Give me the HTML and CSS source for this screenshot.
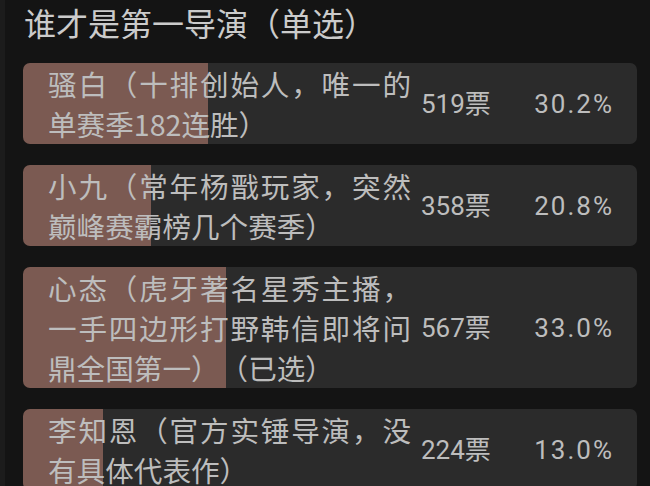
FILE: index.html
```html
<!DOCTYPE html>
<html lang="zh-CN">

<head>
    <meta charset="UTF-8">
    <meta name="viewport" content="width=device-width, initial-scale=1.0">
    <title>投票</title>
    <link rel="stylesheet" href="styles.css">
</head>

<body>
    <div class="poll">
        <h1 class="poll-title">谁才是第一导演（单选）</h1>
        <ul class="options">
            <li class="option" style="--pct: 30.2%">
                <span class="option-text">骚白（十排创始人，唯一的单赛季182连胜）</span>
                <span class="option-votes">519票</span>
                <span class="option-pct">30.2%</span>
            </li>
            <li class="option" style="--pct: 20.8%">
                <span class="option-text">小九（常年杨戬玩家，突然巅峰赛霸榜几个赛季）</span>
                <span class="option-votes">358票</span>
                <span class="option-pct">20.8%</span>
            </li>
            <li class="option" style="--pct: 33.0%">
                <span class="option-text">心态（虎牙著名星秀主播，一手四边形打野韩信即将问鼎全国第一）（已选）</span>
                <span class="option-votes">567票</span>
                <span class="option-pct">33.0%</span>
            </li>
            <li class="option" style="--pct: 13.0%">
                <span class="option-text">李知恩（官方实锤导演，没有具体代表作）</span>
                <span class="option-votes">224票</span>
                <span class="option-pct">13.0%</span>
            </li>
        </ul>
    </div>
</body>

</html>
```

FILE: styles.css
```css
* {
    margin: 0;
    padding: 0;
    box-sizing: border-box;
}

html,
body {
    height: 100%;
}

body {
    overflow: hidden;
    background-color: #141414;
    border-left: 5px solid #1c1c1c;
    color: #bdbdbd;
    font-family: Roboto, "Noto Sans CJK SC", sans-serif;
}

li {
    list-style: none;
}

.poll {
    padding: 0 13px 0 18px;
}

.poll-title {
    margin-left: 1px;
    margin-bottom: 19px;
    font-family: "Noto Sans CJK SC", sans-serif;
    font-size: 32px;
    font-weight: 400;
    line-height: 44px;
    color: #cbcbcb;
}

.options {
    display: flex;
    flex-direction: column;
    gap: 21px;
}

/* 进度条用背景渐变画，宽度由 --pct 决定 */
.option {
    display: grid;
    grid-template-columns: 363px 1fr auto;
    align-items: center;
    width: 614px;
    padding: 0.5px 23px 0.5px 25px;
    border-radius: 7px;
    background: linear-gradient(to right, #7b5a52 var(--pct), #2b2b2b var(--pct));
}

.option-text {
    font-family: "Noto Sans CJK SC", sans-serif;
    font-size: 28.6px;
    line-height: 40px;
    text-align: justify;
    text-spacing-trim: space-all;
}

.option-votes {
    padding-left: 10px;
    font-size: 26px;
    line-height: 40px;
}

.option-pct {
    font-size: 26px;
    line-height: 40px;
    letter-spacing: 2px;
}
```
